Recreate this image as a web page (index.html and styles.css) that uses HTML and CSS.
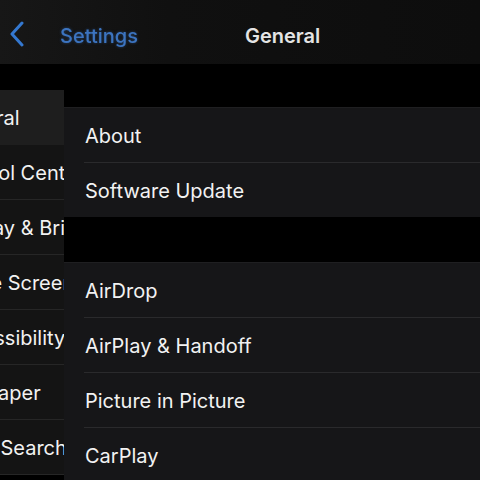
FILE: index.html
```html
<!DOCTYPE html>
<html>
<head>
<meta charset="utf-8">
<link rel="stylesheet" href="styles.css">
</head>
<body>
<div class="screen">
  <header class="nav">
    <svg class="chev" width="16" height="26" viewBox="0 0 16 26"><path d="M13 2 L3 13 L13 24" fill="none" stroke="#3478d0" stroke-width="3" stroke-linecap="round" stroke-linejoin="round"/></svg>
    <span class="back">Settings</span>
    <span class="title">General</span>
  </header>
  <main class="main">
    <nav class="sidebar">
      <div class="srow selected"><span class="slabel">General</span></div>
      <div class="srow"><span class="slabel">Control Center</span></div>
      <div class="srow"><span class="slabel">Display &amp; Brightness</span></div>
      <div class="srow"><span class="slabel">Home Screen</span></div>
      <div class="srow"><span class="slabel">Accessibility</span></div>
      <div class="srow"><span class="slabel">Wallpaper</span></div>
      <div class="srow"><span class="slabel">Siri &amp; Search</span></div>
    </nav>
    <section class="content">
      <div class="group">
        <div class="row"><span>About</span></div>
        <div class="row"><span>Software Update</span></div>
      </div>
      <div class="group">
        <div class="row"><span>AirDrop</span></div>
        <div class="row"><span>AirPlay &amp; Handoff</span></div>
        <div class="row"><span>Picture in Picture</span></div>
        <div class="row"><span>CarPlay</span></div>
      </div>
    </section>
  </main>
</div>
</body>
</html>
```
FILE: styles.css
```css
html, body {
  margin: 0;
  padding: 0;
  background: #000;
}
.screen {
  width: 480px;
  height: 480px;
  overflow: hidden;
  background: #000;
  font-family: Inter, "Liberation Sans", sans-serif;
  color: #f2f2f2;
}
.nav {
  height: 64px;
  display: flex;
  align-items: center;
  padding-top: 8px;
  box-sizing: border-box;
  background: linear-gradient(90deg, #171717 0%, #101010 35%, #0d0d0d 100%);
}
.chev {
  margin-left: 9px;
  margin-top: -4px;
  flex: none;
}
.back {
  margin-left: 35px;
  font-size: 20px;
  font-weight: 500;
  color: #3c74c0;
  filter: blur(0.6px);
  text-shadow: 0 0 3px rgba(60,116,192,0.5);
}
.title {
  margin-left: 107px;
  font-size: 20px;
  font-weight: 600;
  color: #e4e4e4;
}
.main {
  display: flex;
  align-items: flex-start;
}
.sidebar {
  width: 64px;
  flex: none;
  overflow: hidden;
  margin-top: 26px;
  background: #141414;
}
.srow {
  height: 55px;
  box-sizing: border-box;
  border-bottom: 1px solid #262626;
  display: flex;
  align-items: center;
  padding-top: 2px;
  white-space: nowrap;
  font-size: 20px;
}
.srow.selected {
  background: #1e1e1e;
  border-bottom-color: #1e1e1e;
}
.slabel {
  margin-left: -54px;
}
.content {
  flex: 1;
  margin-top: 43px;
  display: flex;
  flex-direction: column;
  gap: 45px;
}
.group {
  background: #161618;
  box-shadow: inset 0 1px 0 #1f1f21;
}
.row {
  height: 55px;
  box-sizing: border-box;
  display: flex;
  align-items: center;
  padding-left: 21px;
  padding-top: 2px;
  font-size: 20px;
}
.row + .row {
  border-top: 1px solid #2a2a2c;
  margin-left: 20px;
  padding-left: 1px;
}
```
